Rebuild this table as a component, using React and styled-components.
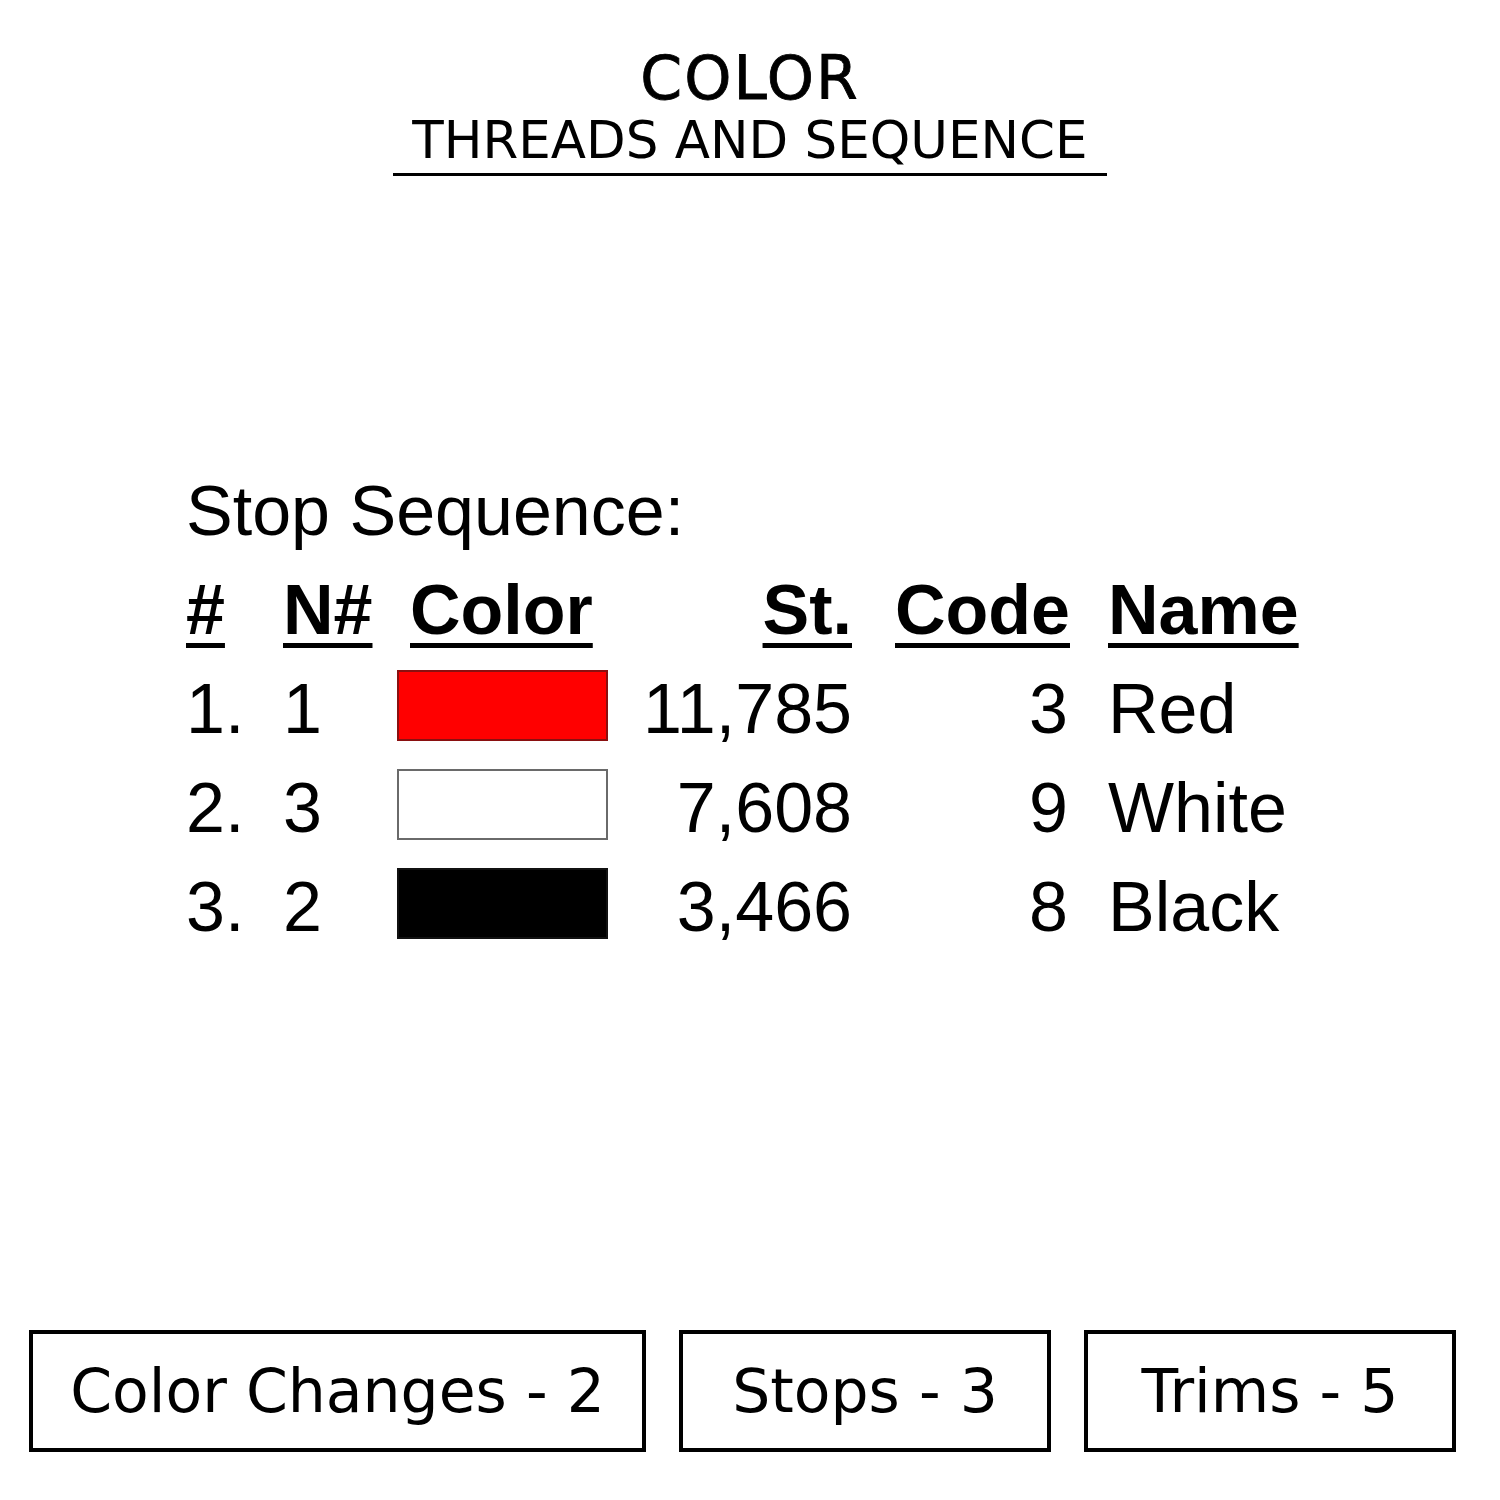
import React from "react";
import styled, { createGlobalStyle } from "styled-components";

const Global = createGlobalStyle`
  html, body { margin: 0; padding: 0; background: #fff; }
  body { font-family: "Liberation Sans", Arial, sans-serif; color: #000; }
`;

const Page = styled.div`
  width: 1500px;
  height: 1500px;
  display: flex;
  flex-direction: column;
  box-sizing: border-box;
  padding-bottom: 48px;
  background: #fff;
`;

const TitleBlock = styled.header`
  margin-top: 48px;
  display: flex;
  flex-direction: column;
  align-items: center;
  font-family: "DejaVu Sans", sans-serif;
`;

const Title = styled.h1`
  margin: 0;
  font-size: 60px;
  line-height: 60px;
  font-weight: 400;
  letter-spacing: 2px;
  -webkit-text-stroke: 0.8px #000;
`;

const Subtitle = styled.h2`
  margin: 6px 0 0;
  padding: 0 19px 7px;
  font-size: 51.5px;
  line-height: 52px;
  font-weight: 400;
  border-bottom: 3px solid #000;
`;

const Table = styled.section`
  margin-top: 286px;
  padding-left: 186px;
  display: grid;
  grid-template-columns: 97px 114px 211px 244px 218px 1fr;
  grid-auto-rows: 99px;
  align-items: start;
  font-size: 70px;
  line-height: 99px;
`;

const Caption = styled.div`
  grid-column: 1 / -1;
  height: 99px;
`;

const HeadCell = styled.div`
  font-weight: 700;
  line-height: 98px;
  height: 98px;
  text-align: ${(p) => (p.$right ? "right" : "left")};
  padding-left: ${(p) => p.$indent || 0}px;
  & > span {
    text-decoration: underline;
    text-decoration-thickness: 5px;
    text-underline-offset: 9px;
  }
`;

const Cell = styled.div`
  text-align: ${(p) => (p.$right ? "right" : "left")};
  padding-left: ${(p) => p.$indent || 0}px;
  padding-right: ${(p) => p.$trail || 0}px;
  white-space: nowrap;
`;

const Swatch = styled.div`
  margin-top: 10px;
  width: 211px;
  height: 71px;
  box-sizing: border-box;
  background: ${(p) => p.$fill};
  border: 2px solid ${(p) => p.$edge};
`;

const Footer = styled.footer`
  margin-top: auto;
  padding-left: 29px;
  display: flex;
  gap: 33px;
`;

const StatBox = styled.div`
  width: ${(p) => p.$w}px;
  height: 122px;
  box-sizing: border-box;
  border: 4px solid #000;
  display: flex;
  align-items: center;
  justify-content: center;
  font-family: "DejaVu Sans", sans-serif;
  font-size: 60px;
  line-height: 1;
`;

const rows = [
  { n: "1.", needle: "1", fill: "#ff0000", edge: "#8a1010", st: "11,785", code: "3", name: "Red" },
  { n: "2.", needle: "3", fill: "#ffffff", edge: "#6a6a6a", st: "7,608", code: "9", name: "White" },
  { n: "3.", needle: "2", fill: "#000000", edge: "#111111", st: "3,466", code: "8", name: "Black" },
];

export default function App() {
  return (
    <>
      <Global />
      <Page>
        <TitleBlock>
          <Title>COLOR</Title>
          <Subtitle>THREADS AND SEQUENCE</Subtitle>
        </TitleBlock>

        <Table>
          <Caption>Stop Sequence:</Caption>
          <HeadCell><span>#</span></HeadCell>
          <HeadCell><span>N#</span></HeadCell>
          <HeadCell $indent={13}><span>Color</span></HeadCell>
          <HeadCell $right><span>St.</span></HeadCell>
          <HeadCell $right><span>Code</span></HeadCell>
          <HeadCell $indent={38}><span>Name</span></HeadCell>
          {rows.map((r) => (
            <React.Fragment key={r.n}>
              <Cell>{r.n}</Cell>
              <Cell>{r.needle}</Cell>
              <Swatch $fill={r.fill} $edge={r.edge} />
              <Cell $right>{r.st}</Cell>
              <Cell $right $trail={2}>{r.code}</Cell>
              <Cell $indent={38}>{r.name}</Cell>
            </React.Fragment>
          ))}
        </Table>

        <Footer>
          <StatBox $w={617}>Color Changes - 2</StatBox>
          <StatBox $w={372}>Stops - 3</StatBox>
          <StatBox $w={372}>Trims - 5</StatBox>
        </Footer>
      </Page>
    </>
  );
}
